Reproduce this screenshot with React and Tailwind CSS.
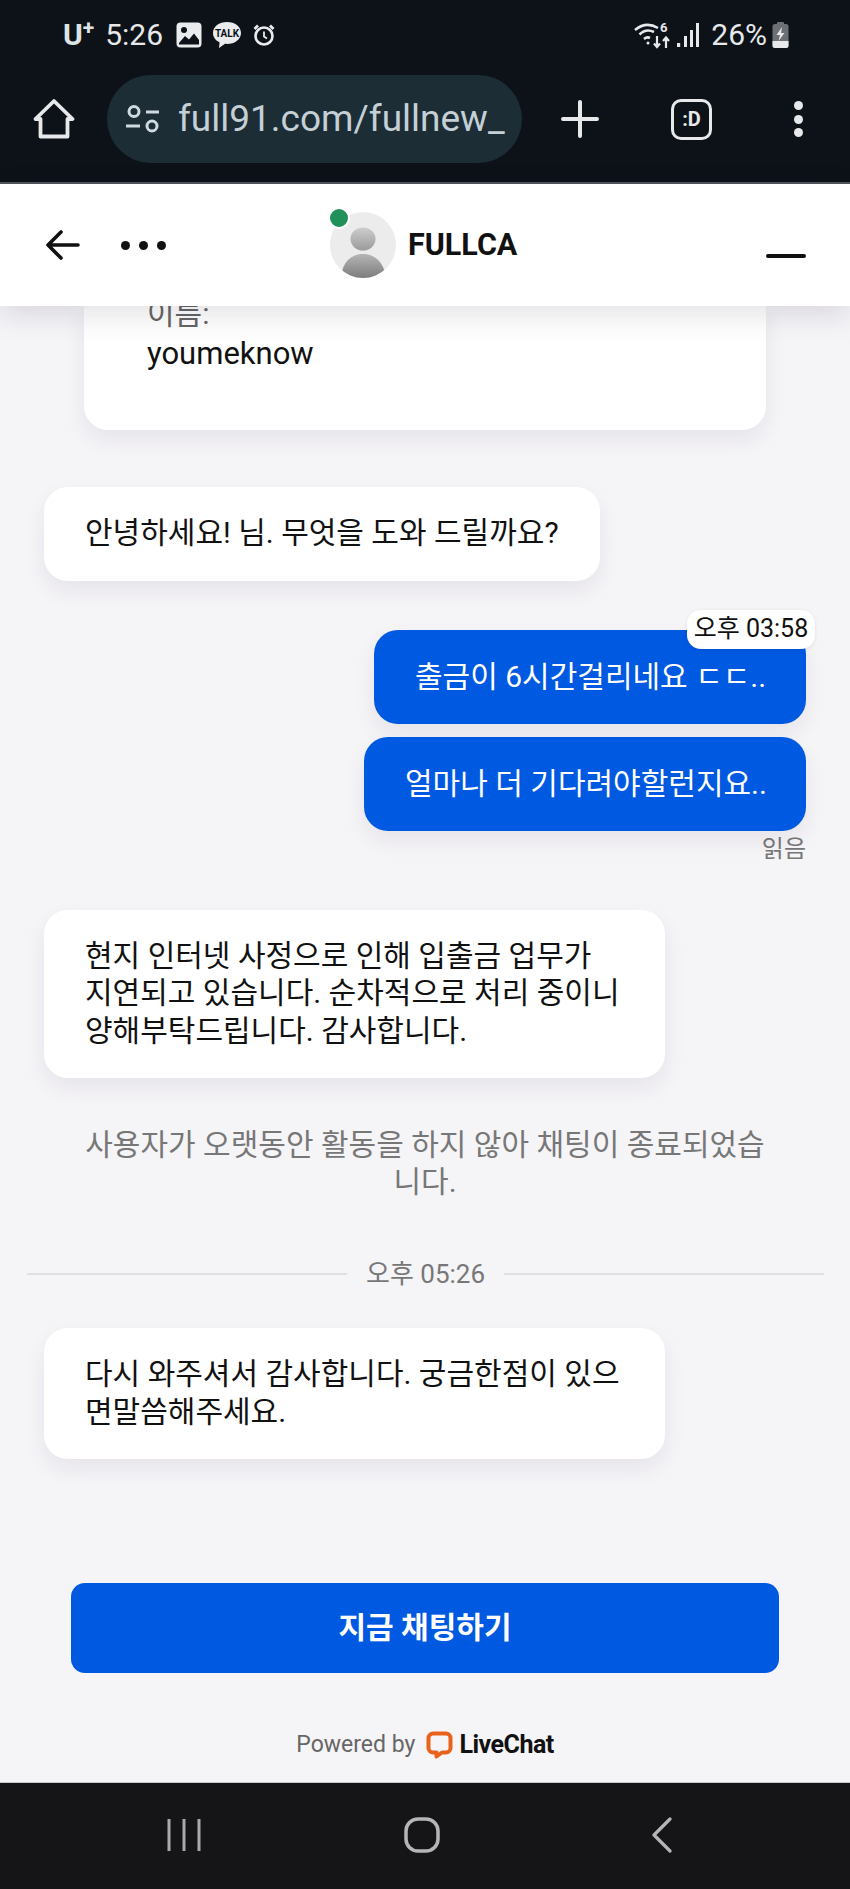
const KR = { fontFamily: 'Roboto, "Noto Sans CJK KR", sans-serif' };

function Bubble({ className = "", children }) {
  return (
    <div className={`rounded-[24px] bg-white px-[41px] pb-[29px] pt-[27px] text-[30px] leading-[37.5px] whitespace-nowrap text-[#111] shadow-[0_10px_22px_rgba(40,35,60,0.07)] ${className}`}>
      {children}
    </div>
  );
}

function UserBubble({ className = "", children }) {
  return (
    <div className={`relative flex h-[94px] items-center whitespace-nowrap rounded-[24px] bg-[#0059e1] px-[41px] text-[30px] leading-[37px] text-white shadow-[0_10px_22px_rgba(40,35,60,0.07)] ${className}`}>
      {children}
    </div>
  );
}

export default function App() {
  return (
    <div style={KR} className="flex h-[1889px] w-[850px] flex-col overflow-hidden bg-[#f5f4f7]">
      {/* Browser chrome */}
      <div className="h-[184px] shrink-0 border-b-[2px] border-[#50545a] bg-[#0d1219] text-[#e6e8ea]">
        <div className="flex h-[61px] items-end justify-between pb-[8px] pl-[63px] pr-[61px]">
          <div className="flex items-center">
            <span className="text-[30px] font-bold leading-[36px] text-[#dfe3e4]">U<sup className="text-[21px] leading-none">+</sup></span>
            <span className="ml-[11px] text-[30px] leading-[36px]">5:26</span>
            <svg className="ml-[13px]" width="26" height="26" viewBox="0 0 26 26">
              <rect x="0.5" y="0.5" width="25" height="25" rx="4" fill="#e9ebec" />
              <circle cx="8" cy="8" r="3" fill="#0d1219" />
              <path d="M3 21 L9 14 L13 17.5 L18 11.5 L23 18 L23 22.5 L3 22.5 Z" fill="#0d1219" />
            </svg>
            <svg className="ml-[10px]" width="30" height="28" viewBox="0 0 30 28">
              <path d="M15 1C7 1 1 5.6 1 12c0 4 2.6 7.5 6.6 9.4L7 27l6-4.2c.7.1 1.3.1 2 .1 8 0 14-4.8 14-11S23 1 15 1z" fill="#e9ebec" />
              <text x="15" y="16" textAnchor="middle" fontSize="10" fontWeight="700" fill="#0d1219" fontFamily="Roboto">TALK</text>
            </svg>
            <svg className="ml-[11px]" width="22" height="22" viewBox="0 0 22 22" fill="none" stroke="#e9ebec">
              <circle cx="11" cy="12" r="8.5" strokeWidth="2.6" />
              <path d="M11 7.5V12.5L14 14.5" strokeWidth="1.8" />
              <path d="M1.5 5L5 1.5M20.5 5L17 1.5" strokeWidth="2.8" />
            </svg>
          </div>
          <div className="flex items-center">
            <svg width="36" height="28" viewBox="0 0 36 28" fill="none" stroke="#e6e8ea" strokeWidth="2.6">
              <path d="M1 9 Q12 0 24 7" />
              <path d="M5.500 13.500 Q12 7 20 11" />
              <path d="M10 18 Q13 15.500 16 17" />
              <circle cx="14" cy="22" r="1.500" fill="#e6e8ea" stroke="none" />
              <text x="26" y="11" fontSize="13" fontWeight="700" fill="#e6e8ea" stroke="none" fontFamily="Roboto">6</text>
              <path d="M23 15V26M20 22.500L23 26L26 22.500M32 27V17M29 20L32 16.500L35 20" strokeWidth="2.200" />
            </svg>
            <svg className="ml-[6px]" width="24" height="26" viewBox="0 0 24 26" fill="#e6e8ea">
              <rect x="1" y="21" width="3.200" height="4" />
              <rect x="8" y="14" width="3" height="11" />
              <rect x="14" y="8" width="3" height="17" />
              <rect x="20" y="1" width="3" height="24" />
            </svg>
            <span className="ml-[11px] text-[30px] leading-[36px]">26%</span>
            <svg className="ml-[5px]" width="17" height="26" viewBox="0 0 17 26">
              <rect x="5" y="0" width="7" height="3" rx="1" fill="#6c7074" />
              <rect x="0.500" y="2" width="16" height="24" rx="2.500" fill="#6c7074" />
              <path d="M0.500 19H16.500V23.500a2.500 2.500 0 0 1-2.500 2.500H3a2.500 2.500 0 0 1-2.500-2.500Z" fill="#e6e8ea" />
              <path d="M10 5L4.500 13H8L6.500 19L12.500 11H9Z" fill="#e6e8ea" />
            </svg>
          </div>
        </div>
        <div className="mt-[14px] flex h-[88px] items-center pl-[33px]">
          <svg width="42" height="42" viewBox="0 0 42 42" fill="none" stroke="#e6e8ea" strokeWidth="3.800" strokeLinejoin="round" strokeLinecap="round">
            <path d="M2.500 21L21 3L39.500 21H34.500V38.500H7.500V21Z" />
          </svg>
          <div className="ml-[32px] flex h-[88px] w-[415px] items-center rounded-full bg-[#1c2d35] pl-[18px]">
            <svg width="36" height="30" viewBox="0 0 36 30" fill="none" stroke="#cfdae0" strokeWidth="3">
              <circle cx="9" cy="7.500" r="5" />
              <path d="M21 8H34M1 22H15" />
              <circle cx="27" cy="22" r="5" />
            </svg>
            <span className="ml-[17px] whitespace-nowrap text-[37px] leading-[44px] text-[#c4d0d6]">full91.com/fullnew_</span>
          </div>
          <svg className="ml-[39px]" width="38" height="38" viewBox="0 0 38 38" stroke="#e6e8ea" strokeWidth="4" strokeLinecap="round">
            <path d="M19 2V36M2 19H36" />
          </svg>
          <div className="ml-[72px] flex h-[41px] w-[41px] items-center justify-center rounded-[10px] border-[3.5px] border-[#e6e8ea] text-[20px] font-bold leading-none">:D</div>
          <div className="ml-[82px] flex flex-col gap-[4.500px]">
            <span className="h-[9px] w-[9px] rounded-full bg-[#e6e8ea]" />
            <span className="h-[9px] w-[9px] rounded-full bg-[#e6e8ea]" />
            <span className="h-[9px] w-[9px] rounded-full bg-[#e6e8ea]" />
          </div>
        </div>
      </div>

      {/* Chat header */}
      <div className="relative z-10 flex h-[122px] shrink-0 items-center bg-white pl-[44px] pr-[44px] shadow-[0_8px_28px_rgba(30,25,50,0.13)]">
        <svg width="36" height="32" viewBox="0 0 36 32" fill="none" stroke="#111" strokeWidth="3.600" strokeLinecap="round" strokeLinejoin="round">
          <path d="M34 16H4M17 3L4 16L17 29" />
        </svg>
        <div className="ml-[41px] flex gap-[9px]">
          <span className="h-[9px] w-[9px] rounded-full bg-[#111]" />
          <span className="h-[9px] w-[9px] rounded-full bg-[#111]" />
          <span className="h-[9px] w-[9px] rounded-full bg-[#111]" />
        </div>
        <div className="relative ml-[164px] mb-[1px] h-[66px] w-[66px] overflow-visible">
          <svg width="66" height="66" viewBox="0 0 66 66">
            <defs>
              <linearGradient id="bodyGrad" x1="0" y1="0" x2="0" y2="1">
                <stop offset="0" stopColor="#b5b5b5" />
                <stop offset="1" stopColor="#7d7d7d" />
              </linearGradient>
              <linearGradient id="headGrad" x1="0" y1="0" x2="0" y2="1">
                <stop offset="0" stopColor="#cdcdcd" />
                <stop offset="1" stopColor="#9b9b9b" />
              </linearGradient>
              <clipPath id="avatarClip"><circle cx="33" cy="33" r="33" /></clipPath>
            </defs>
            <circle cx="33" cy="33" r="33" fill="#ececec" />
            <g clipPath="url(#avatarClip)">
              <ellipse cx="33" cy="27" rx="12.500" ry="11.500" fill="url(#headGrad)" />
              <path d="M11 66C12 50 21 42 33 42C45 42 54 50 56 66Z" fill="url(#bodyGrad)" />
            </g>
          </svg>
          <span className="absolute left-[-2px] top-[-5px] h-[22px] w-[22px] rounded-full border-[2px] border-white bg-[#22905a]" />
        </div>
        <span className="mb-[1px] ml-[12px] text-[30.5px] font-bold leading-[36px] text-[#111]">FULLCA</span>
        <div className="ml-auto mt-[22px] h-[4px] w-[40px] rounded-full bg-[#111]" />
      </div>

      {/* Messages */}
      <div className="flex min-h-0 flex-1 flex-col overflow-hidden">
        <div className="mx-[84px] -mt-[2px] h-[126px] shrink-0 rounded-b-[24px] bg-white pl-[63px] shadow-[0_10px_22px_rgba(40,35,60,0.07)]">
          <div className="-mt-[10px] text-[30px] leading-[40px] text-[#666]">이름:</div>
          <div className="text-[31px] leading-[40px] text-[#111]">youmeknow</div>
        </div>

        <Bubble className="ml-[44px] mt-[57px] w-[556px]">
          안녕하세요! 님. 무엇을 도와 드릴까요?
        </Bubble>

        <div className="mr-[44px] mt-[49px] flex flex-col items-end gap-[13px]">
          <UserBubble className="w-[432px]">
            출금이 6시간걸리네요 ㄷㄷ..
            <span className="absolute right-[-9px] top-[-20px] flex h-[39px] w-[128px] items-center justify-center rounded-[14px] bg-white text-[25px] leading-[30px] text-[#111] shadow-[0_1px_4px_rgba(0,0,0,0.08)]">오후 03:58</span>
          </UserBubble>
          <UserBubble className="w-[442px]">얼마나 더 기다려야할런지요..</UserBubble>
        </div>
        <div className="mr-[44px] mt-[2px] text-right text-[24px] leading-[32px] text-[#777]">읽음</div>

        <Bubble className="ml-[44px] mt-[45px] w-[621px]">
          현지 인터넷 사정으로 인해 입출금 업무가<br />
          지연되고 있습니다. 순차적으로 처리 중이니<br />
          양해부탁드립니다. 감사합니다.
        </Bubble>

        <div className="mt-[48px] whitespace-nowrap text-center text-[30px] leading-[37px] text-[#777]">
          사용자가 오랫동안 활동을 하지 않아 채팅이 종료되었습<br />니다.
        </div>

        <div className="ml-[27px] mr-[26px] mt-[58px] flex items-center">
          <div className="h-[2px] flex-1 bg-[#e0dfe4]" />
          <span className="px-[19px] text-[26px] leading-[32px] text-[#777]">오후 05:26</span>
          <div className="h-[2px] flex-1 bg-[#e0dfe4]" />
        </div>

        <Bubble className="ml-[44px] mt-[38px] w-[621px]">
          다시 와주셔서 감사합니다. 궁금한점이 있으<br />면말씀해주세요.
        </Bubble>

        <div className="mt-auto flex flex-col items-center">
          <div className="flex h-[90px] w-[708px] items-center justify-center rounded-[14px] bg-[#0059e1] text-[30px] font-bold leading-[36px] text-white">지금 채팅하기</div>
          <div className="mb-[22px] mt-[56px] flex h-[31px] items-center">
            <span className="text-[23px] leading-[28px] text-[#666]">Powered by</span>
            <svg className="ml-[11px]" width="27" height="28" viewBox="0 0 27 28" fill="none">
              <path d="M7 2.500H20A4.500 4.500 0 0 1 24.500 7V17A4.500 4.500 0 0 1 20 21.500H16L10.500 25.500V21.500H7A4.500 4.500 0 0 1 2.500 17V7A4.500 4.500 0 0 1 7 2.500Z" stroke="#e8621c" strokeWidth="4" strokeLinejoin="round" />
            </svg>
            <span className="ml-[6px] text-[25px] font-bold leading-[28px] tracking-[-0.5px] text-[#111]">LiveChat</span>
          </div>
        </div>
      </div>

      {/* Android nav bar */}
      <div className="flex h-[107px] shrink-0 items-center border-t border-[#c9c9cc] bg-[#151417] pb-[3px]">
        <svg className="ml-[167px]" width="34" height="34" viewBox="0 0 34 34" stroke="#a9a9ab" strokeWidth="3">
          <path d="M2 1V33M17 1V33M32 1V33" />
        </svg>
        <svg className="ml-[203px]" width="36" height="36" viewBox="0 0 36 36" fill="none" stroke="#b5b5b7" strokeWidth="3.500">
          <rect x="2" y="2" width="32" height="32" rx="12" />
        </svg>
        <svg className="ml-[211px]" width="22" height="36" viewBox="0 0 22 36" fill="none" stroke="#b5b5b7" strokeWidth="3.200" strokeLinecap="round" strokeLinejoin="round">
          <path d="M19 2L3 18L19 34" />
        </svg>
      </div>
    </div>
  );
}
